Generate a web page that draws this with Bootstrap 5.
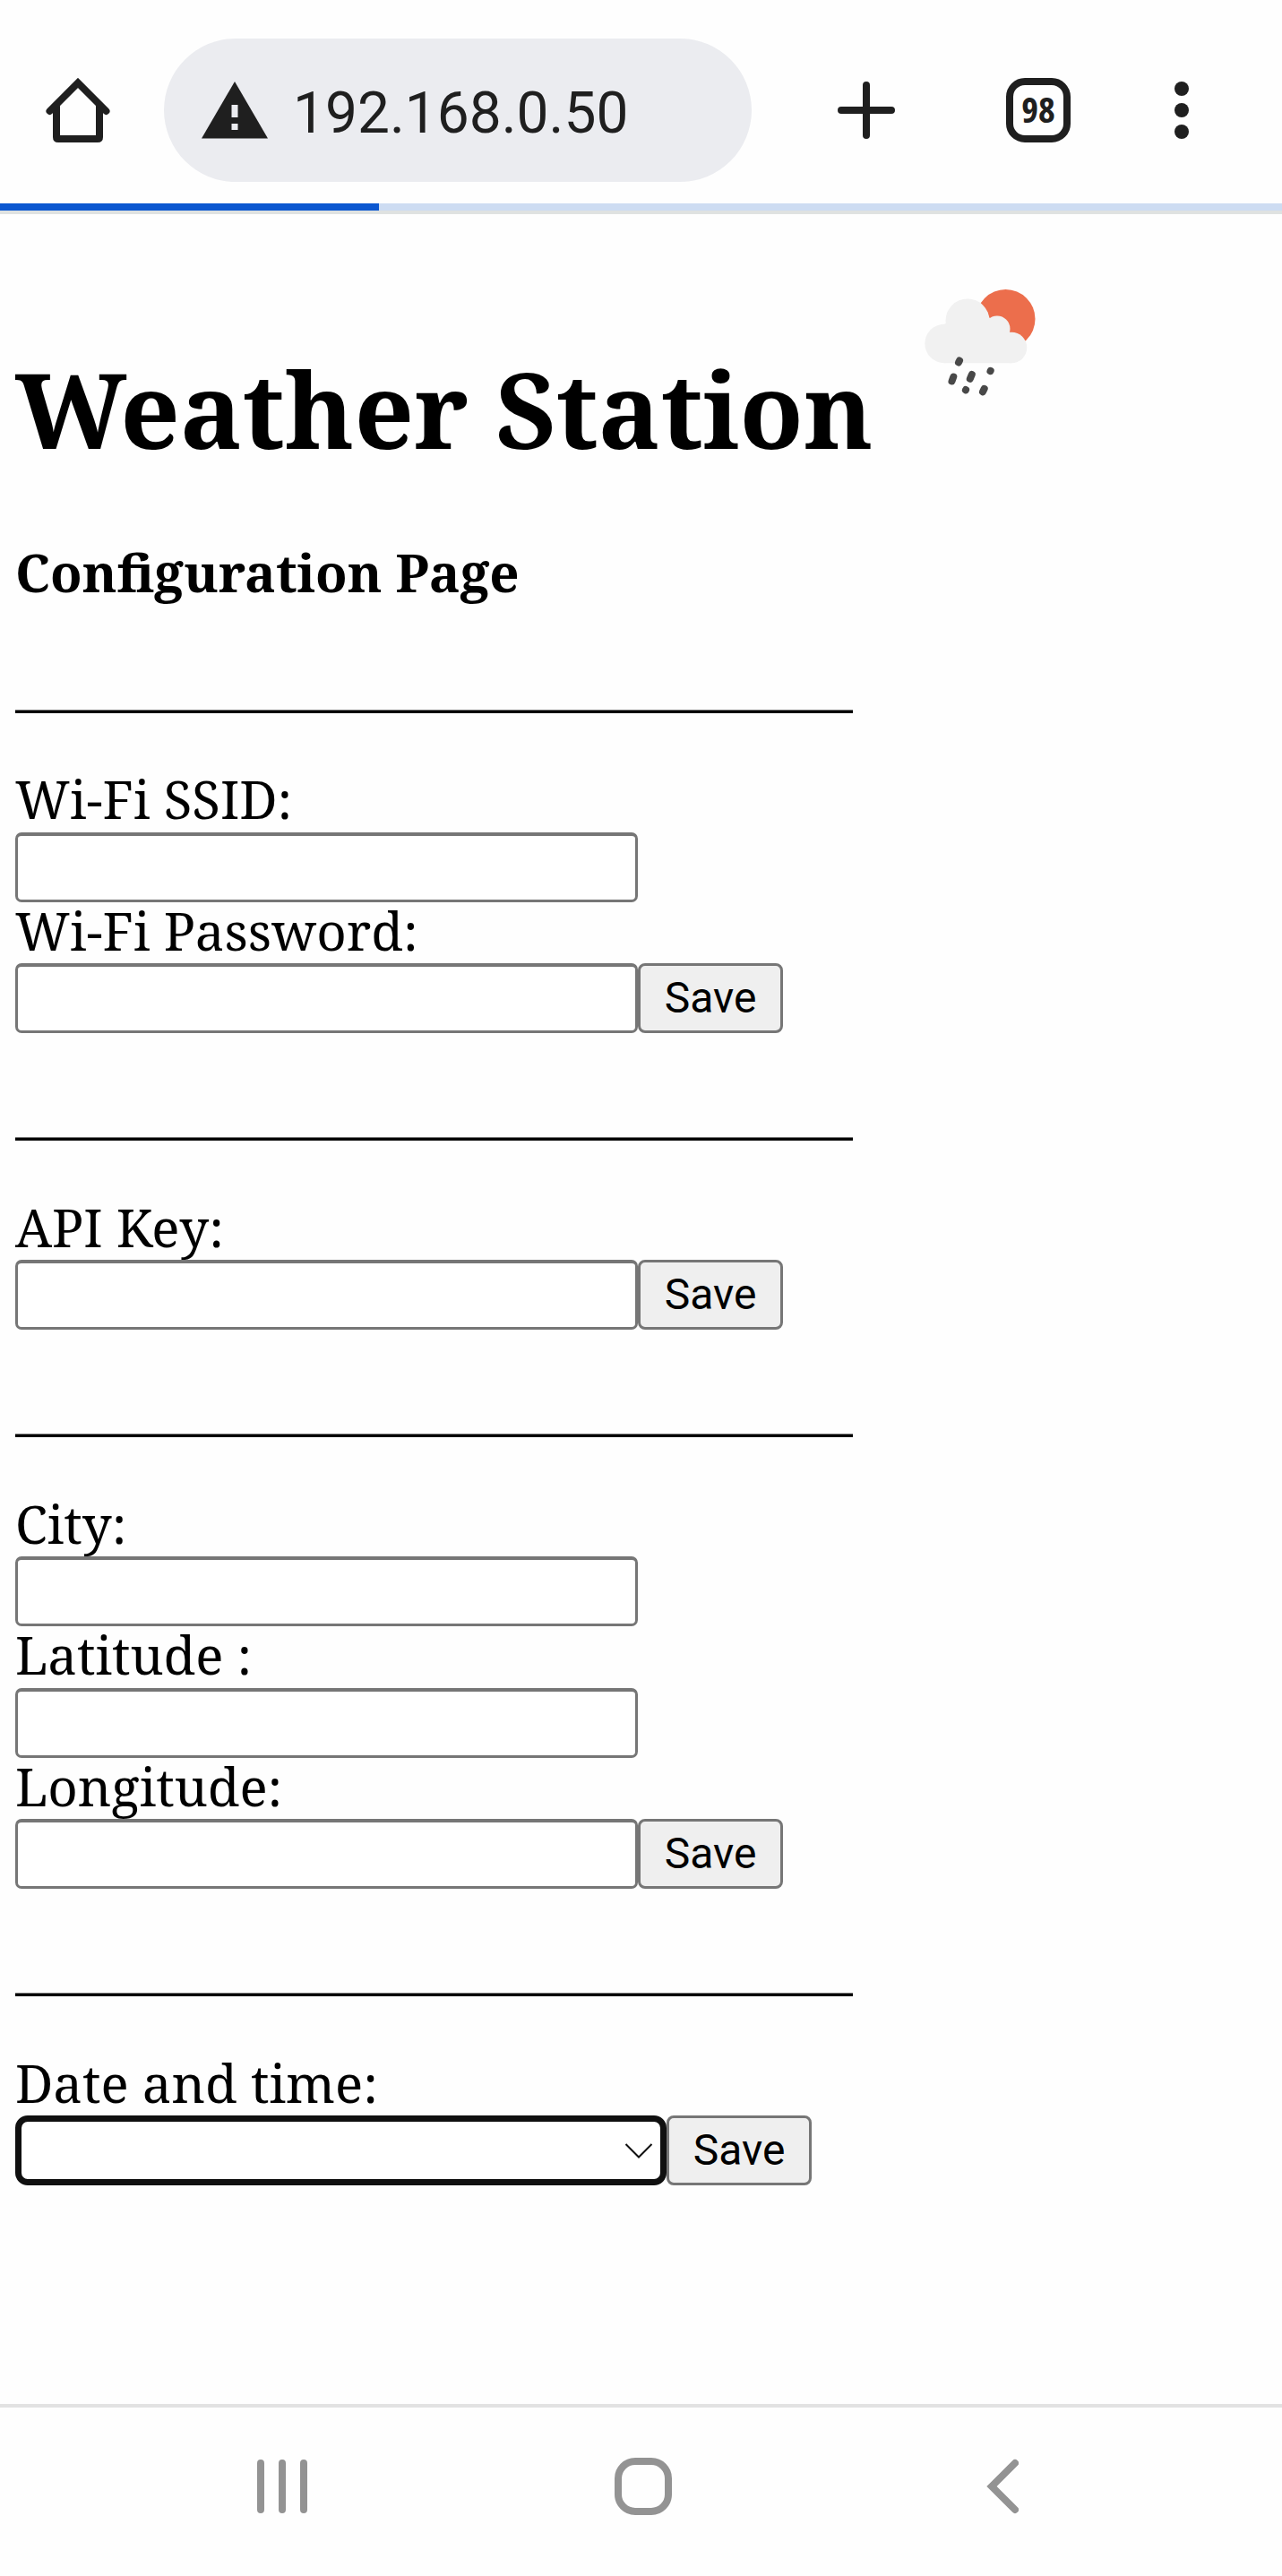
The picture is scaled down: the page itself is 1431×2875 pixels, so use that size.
<!DOCTYPE html>
<html lang="en">
<head>
<meta charset="utf-8">
<meta name="viewport" content="width=device-width, initial-scale=1">
<title>Weather Station</title>
<link href="https://cdn.jsdelivr.net/npm/bootstrap@5.3.0/dist/css/bootstrap.min.css" rel="stylesheet">
<style>
  body { background: #fefefe; color: #000; font-family: "Noto Serif", "DejaVu Serif Condensed", serif; font-size: 58.2px; min-height: 2875px; }
  svg { display: block; flex: none; }
  .toolbar { height: 227px; padding: 43px 0 24px 51px; color: #1f1f1f; }
  .omnibox { width: 656px; height: 160px; margin-left: 60px; padding-left: 42px; background: #ebecf0; font: 64px/1 Roboto, sans-serif; }
  .omnibox span { margin-left: 28px; padding-top: 7px; }
  .new-tab { margin-left: 96px; }
  .more-dots { margin-left: 116px; }
  .tabs-btn { width: 72px; height: 72px; margin-left: 124px; padding-bottom: 3px; border: 8px solid #1f1f1f; border-radius: 21px; font: 700 40px/1 "Open Sans", "Noto Sans", sans-serif; font-stretch: 75%; }
  .load-track { height: 8px; background: #cddcf2; border-radius: 0; }
  .load-track .progress-bar { background: #0b57d0; }
  .load-edge { height: 4px; background: #dfe2e1; }
  .page { padding-left: 17px; }
  .page h1 { margin: 157px 0 0; font-size: 116.4px; line-height: 120px; font-weight: 700; color: #000; white-space: nowrap; width: 964px; }
  .page h3 { margin: 88px 0 118px; font-size: 58.2px; line-height: 70px; font-weight: 700; color: #000; }
  .sky-icon { margin-top: 51px; }
  .rule { width: 935px; height: 4px; background: linear-gradient(#777 1px, #000 1px); }
  .group { padding: 65px 0 116px; }
  .group label { display: block; height: 68px; line-height: 63px; }
  .group label.tall { height: 69px; }
  .group.snug { padding-top: 64px; }
  .field.form-control { width: 695px; height: 78px; padding: 0 12px; border: 3px solid #767676; border-top-width: 4px; border-radius: 7px; background: #fff; flex: none; }
  .field.form-select { width: 727px; height: 78px; padding: 0; border: 7px solid #101010; border-radius: 14px; background: #fff; flex: none; }
  .save.btn { width: 162px; height: 78px; padding: 0; border: 3px solid #767676; border-radius: 8px; background: #efefef; color: #000; font: 48px/1 Roboto, sans-serif; }
  .picker-arrow { position: absolute; right: 15px; top: 30px; pointer-events: none; }
  .sysbar { height: 192px; border-top: 4px solid #e2e2e2; padding: 56px 294px 0 287px; }
  .home-key { margin-right: 9px; }
</style>
</head>
<body class="d-flex flex-column">
<header>
  <nav class="toolbar d-flex align-items-center">
    <svg width="72" height="72" viewBox="0 0 72 72" fill="none" stroke="#1f1f1f" stroke-width="8" stroke-linecap="round"><path d="M12 32V66Q12 68 14 68H58Q60 68 60 66V32"/><path d="M4.500 37L36 5.500L67.500 37"/></svg>
    <div class="omnibox rounded-pill d-flex align-items-center">
      <svg width="74" height="64" viewBox="0 0 74 64"><path fill="#1f1f1f" d="M37 0L74 63.500H0Z"/><path fill="#ebecf0" d="M33.500 26h7v14h-7zM33.500 47h7v7h-7z"/></svg>
      <span>192.168.0.50</span>
    </div>
    <svg class="new-tab" width="64" height="64" viewBox="0 0 64 64" stroke="#1f1f1f" stroke-width="8" stroke-linecap="round"><path d="M32 4V60M4 32H60"/></svg>
    <div class="tabs-btn d-flex align-items-center justify-content-center">98</div>
    <svg class="more-dots" width="16" height="64" viewBox="0 0 16 64" fill="#1f1f1f"><circle cx="8" cy="8" r="8"/><circle cx="8" cy="32" r="8"/><circle cx="8" cy="56" r="8"/></svg>
  </nav>
  <div class="progress load-track"><div class="progress-bar" style="width:29.56%"></div></div>
  <div class="load-edge"></div>
</header>

<main class="page flex-grow-1">
  <div class="d-flex align-items-start">
    <h1>Weather Station</h1>
    <svg class="sky-icon" width="220" height="180" viewBox="0 0 220 180">
      <circle cx="141.500" cy="66" r="33" fill="#ec6e4c"/>
      <g fill="#f1f1f1"><circle cx="99" cy="68" r="24.500"/><circle cx="73" cy="93.500" r="21.700"/><circle cx="132" cy="77" r="14.500"/><circle cx="148" cy="98" r="17.300"/><path d="M73 72L99 55L132 68L148 90V115.200H73Z"/></g>
      <g stroke="#484848" stroke-width="8" stroke-linecap="round"><path d="M90 112.500L89 114.500M83.300 130.500L81.500 135.500M103.800 128L101.800 132.800M124.700 123.800L124.500 124.200M97.100 145L96.900 145.400M117.700 143.800L116 147.300"/></g>
    </svg>
  </div>
  <h3>Configuration Page</h3>

  <div class="rule"></div>
  <section class="group snug">
    <label class="tall" for="ssid">Wi-Fi SSID:</label>
    <input class="form-control field" id="ssid" type="text">
    <label for="pass">Wi-Fi Password:</label>
    <div class="d-flex"><input class="form-control field" id="pass" type="text"><button class="btn save" type="button">Save</button></div>
  </section>

  <div class="rule"></div>
  <section class="group">
    <label for="api">API Key:</label>
    <div class="d-flex"><input class="form-control field" id="api" type="text"><button class="btn save" type="button">Save</button></div>
  </section>

  <div class="rule"></div>
  <section class="group">
    <label for="city">City:</label>
    <input class="form-control field" id="city" type="text">
    <label class="tall" for="lat">Latitude :</label>
    <input class="form-control field" id="lat" type="text">
    <label for="lon">Longitude:</label>
    <div class="d-flex"><input class="form-control field" id="lon" type="text"><button class="btn save" type="button">Save</button></div>
  </section>

  <div class="rule"></div>
  <section class="group pb-0">
    <label for="when">Date and time:</label>
    <div class="d-flex">
      <div class="position-relative">
        <select class="form-select field" id="when"><option></option></select>
        <svg class="picker-arrow" width="32" height="20" viewBox="0 0 32 20" fill="none" stroke="#101010" stroke-width="2"><path d="M1.500 2L16 16.500L30.500 2"/></svg>
      </div>
      <button class="btn save" type="button">Save</button>
    </div>
  </section>
</main>

<footer class="sysbar d-flex justify-content-between align-items-start">
  <svg width="56" height="64" viewBox="0 0 56 64" stroke="#939393" stroke-width="8" stroke-linecap="round"><path d="M4 6V58M28 6V58M52 6V58"/></svg>
  <svg class="home-key" width="64" height="64" viewBox="0 0 64 64" fill="none" stroke="#939393" stroke-width="8"><rect x="4" y="4" width="56" height="56" rx="19"/></svg>
  <svg width="36" height="64" viewBox="0 0 36 64" fill="none" stroke="#939393" stroke-width="8" stroke-linecap="round"><path d="M32 6L6 32L32 58"/></svg>
</footer>
<script src="https://cdn.jsdelivr.net/npm/bootstrap@5.3.0/dist/js/bootstrap.bundle.min.js"></script>
</body>
</html>
